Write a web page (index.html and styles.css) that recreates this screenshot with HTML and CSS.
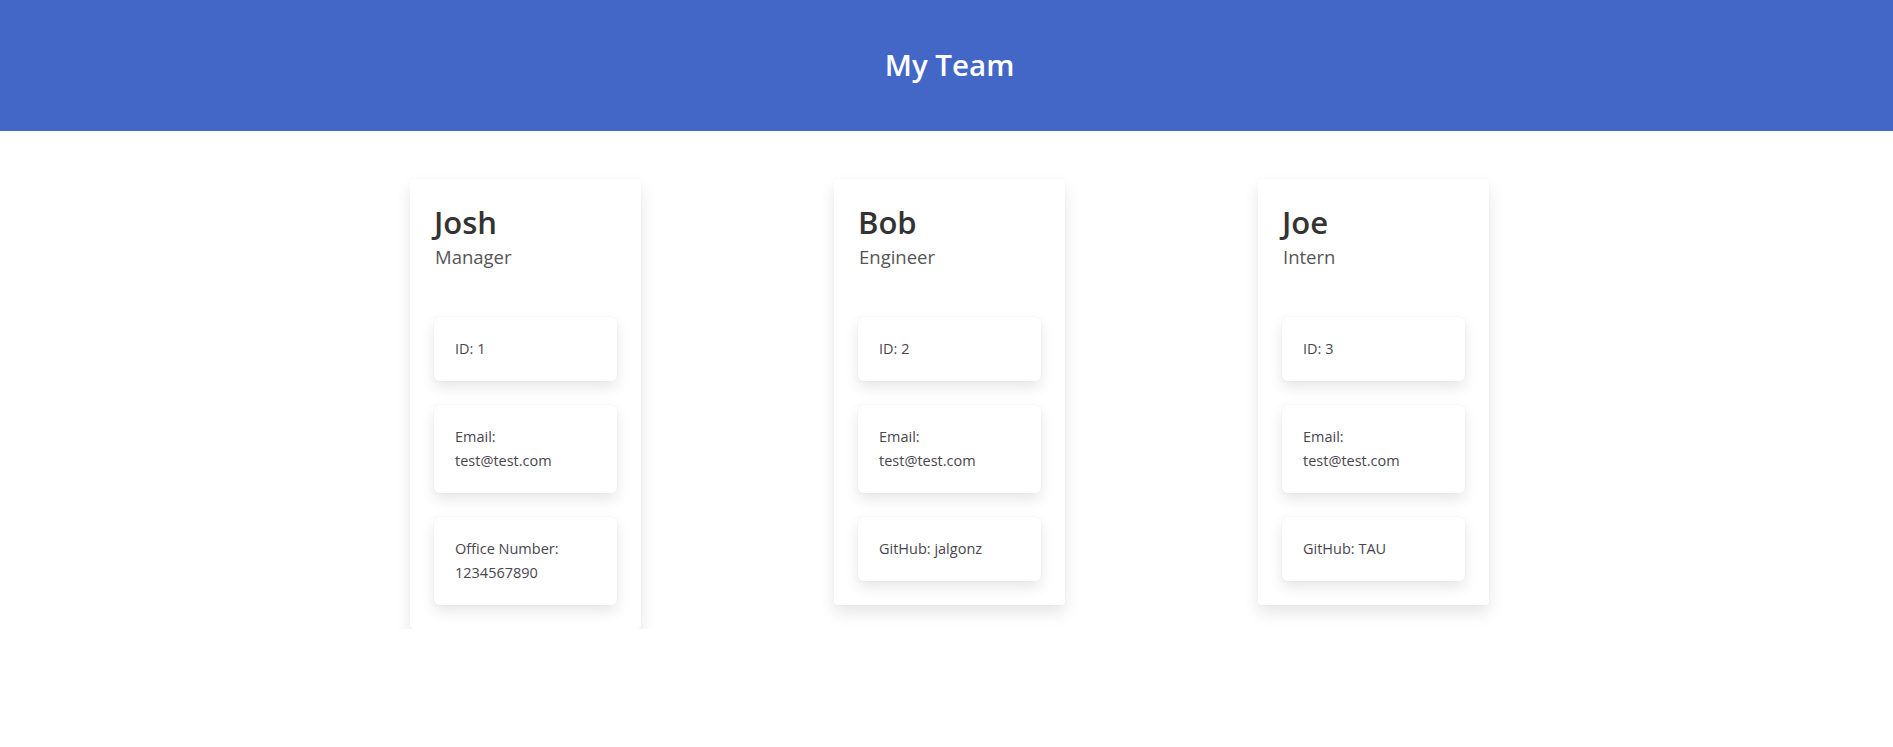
FILE: index.html
```html
<!DOCTYPE html>
<html lang="en">
<head>
<meta charset="utf-8">
<title>My Team</title>
<link rel="stylesheet" href="styles.css">
</head>
<body>
<header class="banner">
  <h1 class="banner-title">My Team</h1>
</header>
<main class="team">
  <section class="card">
    <h2 class="card-name">Josh</h2>
    <h3 class="card-role">Manager</h3>
    <ul class="info-list">
      <li class="info">ID: 1</li>
      <li class="info">Email:<br>test@test.com</li>
      <li class="info">Office Number:<br>1234567890</li>
    </ul>
  </section>
  <section class="card">
    <h2 class="card-name">Bob</h2>
    <h3 class="card-role">Engineer</h3>
    <ul class="info-list">
      <li class="info">ID: 2</li>
      <li class="info">Email:<br>test@test.com</li>
      <li class="info">GitHub: jalgonz</li>
    </ul>
  </section>
  <section class="card">
    <h2 class="card-name">Joe</h2>
    <h3 class="card-role">Intern</h3>
    <ul class="info-list">
      <li class="info">ID: 3</li>
      <li class="info">Email:<br>test@test.com</li>
      <li class="info">GitHub: TAU</li>
    </ul>
  </section>
</main>
</body>
</html>
```
FILE: styles.css
```css
* { box-sizing: border-box; }
html, body {
  margin: 0;
  padding: 0;
  background: #fff;
  font-family: "Open Sans", "Noto Sans", sans-serif;
  color: #212529;
}
.banner {
  height: 131px;
  background: #4367c6;
  display: flex;
  align-items: center;
  justify-content: center;
  padding-left: 6px;
}
.banner-title {
  margin: 0;
  color: #fff;
  font-size: 29.5px;
  font-weight: 600;
  line-height: 1;
  padding-bottom: 2px;
}
.team {
  display: flex;
  justify-content: center;
  align-items: flex-start;
  gap: 193px;
  padding: 48px 0 0 6px;
}
.card {
  width: 231px;
  background: #fff;
  border-radius: 4px;
  box-shadow: 0 8px 16px rgba(0, 0, 0, 0.10), 0 0 2px rgba(0,0,0,0.04);
  padding: 24px;
}
.card-name {
  margin: 0;
  font-size: 31px;
  font-weight: 600;
  line-height: 38px;
  color: #333;
}
.card-role {
  margin: 4px 0 0 1px;
  font-size: 18.5px;
  font-weight: 400;
  line-height: 24px;
  color: #555;
}
.info-list {
  list-style: none;
  margin: 48px 0 0 0;
  padding: 0;
  display: flex;
  flex-direction: column;
  gap: 24px;
}
.info {
  background: #fff;
  border-radius: 6px;
  box-shadow: 0 6px 14px rgba(0, 0, 0, 0.10), 0 0 2px rgba(0,0,0,0.05);
  padding: 20px 12px 20px 21px;
  font-size: 14.5px;
  line-height: 24px;
  color: #4a4550;
}
```
